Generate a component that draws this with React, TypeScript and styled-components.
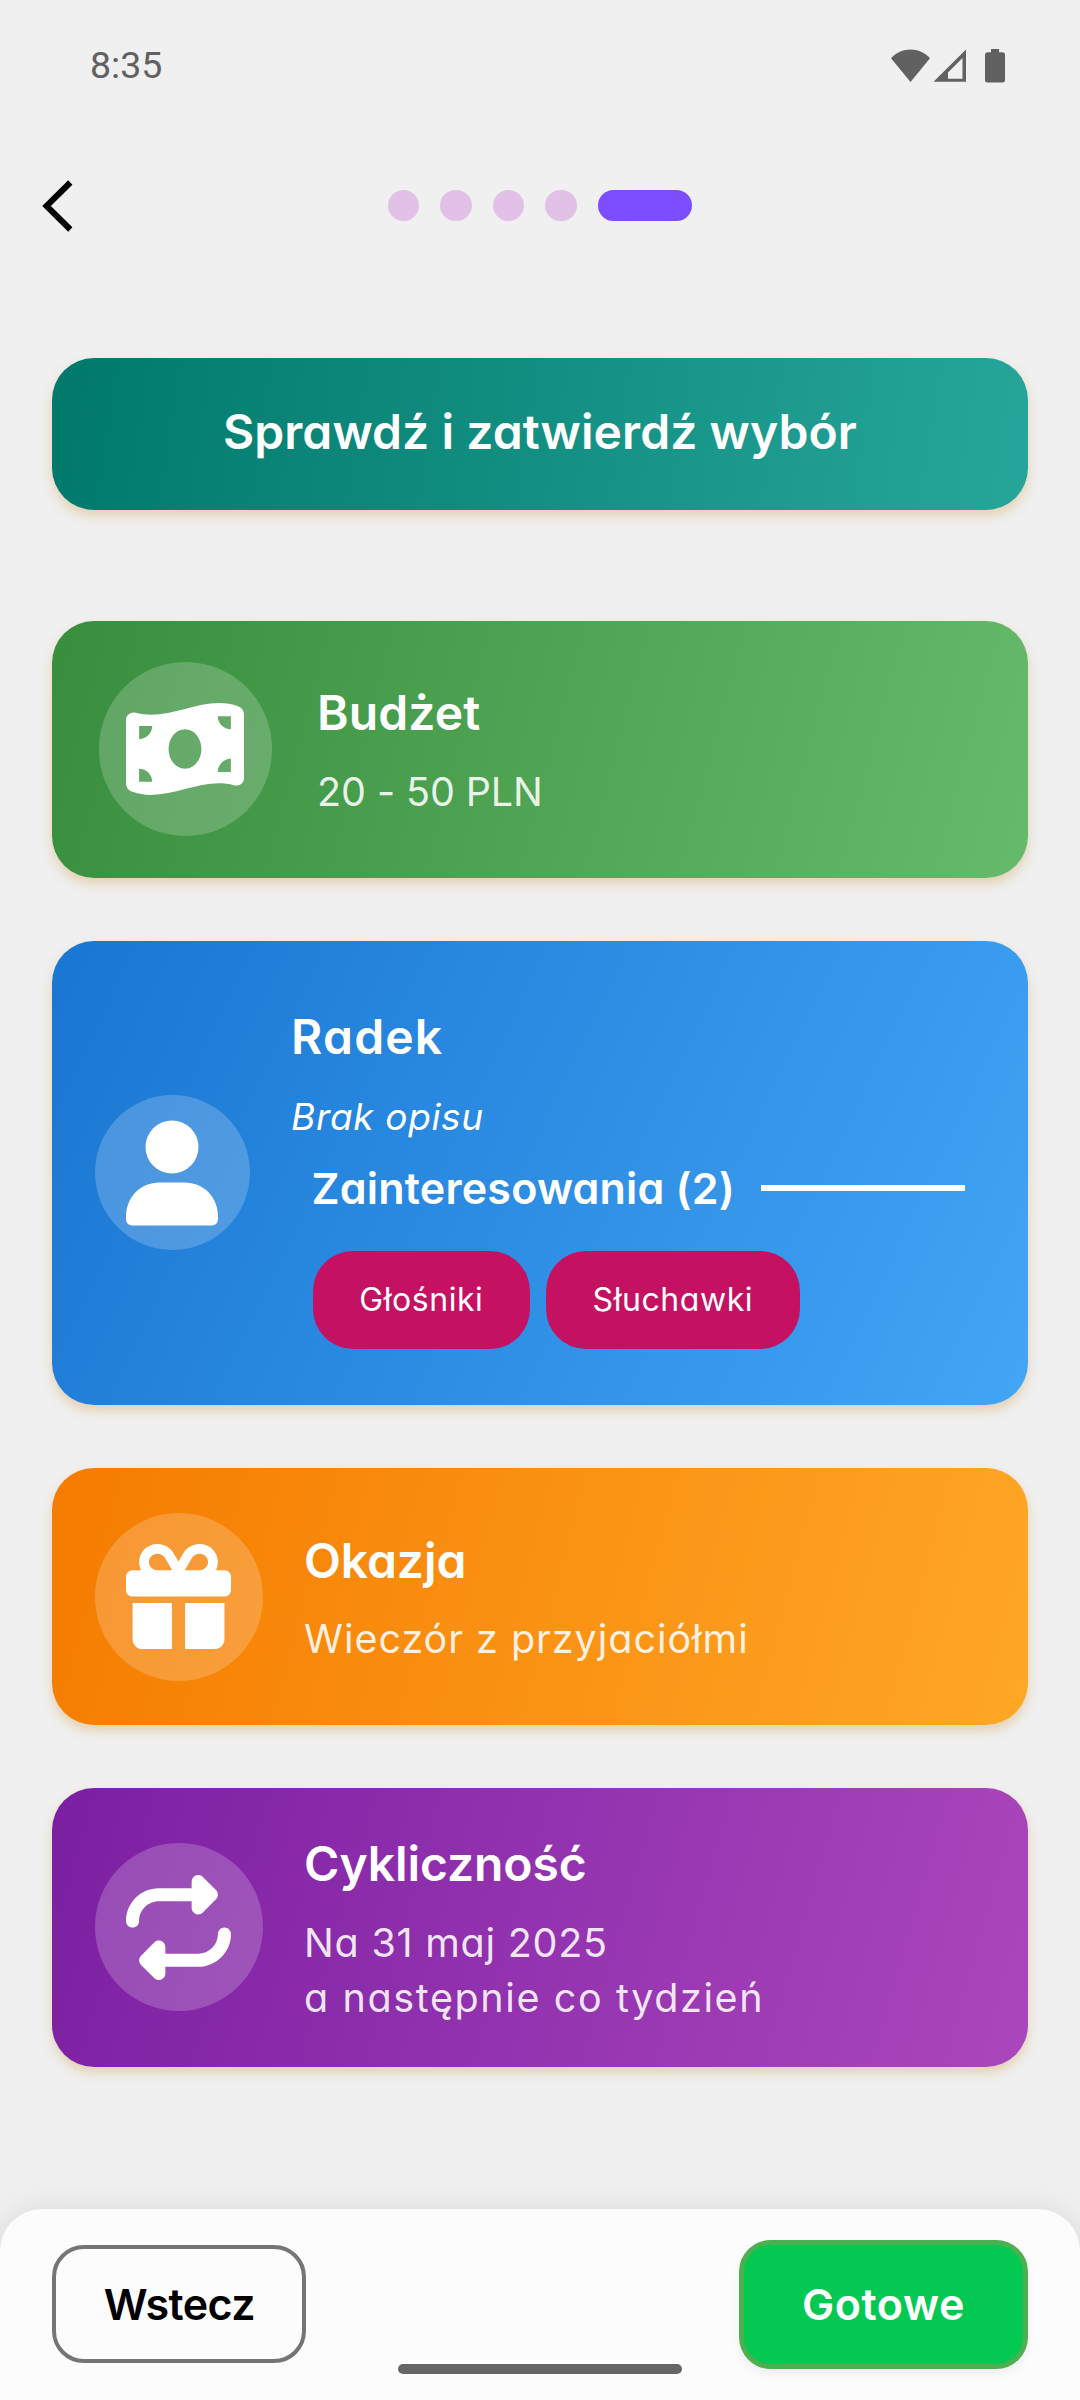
import React from 'react';
import styled, { createGlobalStyle } from 'styled-components';
import { FaMoneyBillWave, FaGift, FaRepeat } from 'react-icons/fa6';

const GlobalStyle = createGlobalStyle`
  *, *::before, *::after { box-sizing: border-box; }
  body { margin: 0; background: #f0f0f0; }
`;

const Screen = styled.div`
  width: 1080px;
  height: 2400px;
  display: flex;
  flex-direction: column;
  overflow: hidden;
  background: #f0f0f0;
  color: #fff;
  font-family: Inter, 'Open Sans', sans-serif;
  font-feature-settings: 'cv11';
`;

const StatusBar = styled.div`
  height: 131px;
  flex: none;
  display: flex;
  align-items: center;
  justify-content: space-between;
  padding: 0 75px 0 90px;
  color: #616161;
`;

const Clock = styled.span`
  padding-bottom: 2px;
  font-family: Roboto, sans-serif;
  font-size: 37.5px;
  line-height: 44px;
`;

const StatusIcons = styled.svg`
  display: block;
  fill: currentColor;
`;

const TopBar = styled.header`
  height: 149px;
  flex: none;
  display: grid;
  grid-template-columns: 1fr auto 1fr;
  align-items: center;
  padding: 0 42px;
`;

const BackButton = styled.button`
  width: 32px;
  height: 52px;
  padding: 0;
  border: 0;
  background: none;
  svg { display: block; }
`;

const Steps = styled.div`
  display: flex;
  gap: 21px;
`;

const Step = styled.span<{ $active?: boolean }>`
  width: ${p => (p.$active ? 94.5 : 31.5)}px;
  height: 31.5px;
  border-radius: 16px;
  background: ${p => (p.$active ? '#7c4dff' : '#e1c2e6')};
`;

const Main = styled.main`
  flex: 1;
  display: flex;
  flex-direction: column;
  gap: 63px;
  padding: 77.5px 52.5px 0 52.4px;
`;

const shadow = '0 6px 11px rgba(205, 150, 60, 0.34)';

const Banner = styled.div`
  height: 152.5px;
  flex: none;
  margin-bottom: 47.5px;
  padding-bottom: 3px;
  display: flex;
  align-items: center;
  justify-content: center;
  border-radius: 42px;
  background: linear-gradient(98.9deg, #00796b, #26a69a);
  box-shadow: ${shadow};
`;

const Card = styled.section<{ $height: number; $angle: number; $from: string; $to: string; $inset?: number; $gap?: number }>`
  height: ${p => p.$height}px;
  flex: none;
  display: flex;
  align-items: center;
  gap: ${p => p.$gap ?? 41.5}px;
  padding: 0 42px 0 ${p => p.$inset ?? 42.2}px;
  border-radius: 42px;
  background: linear-gradient(${p => p.$angle}deg, ${p => p.$from}, ${p => p.$to});
  box-shadow: ${shadow};
`;

const Badge = styled.div<{ $size: number }>`
  width: ${p => p.$size}px;
  height: ${p => p.$size}px;
  flex: none;
  display: flex;
  align-items: center;
  justify-content: center;
  border-radius: 50%;
  background: rgba(255, 255, 255, 0.2);
`;

const Details = styled.div<{ $drop?: number }>`
  flex: 1;
  padding-top: ${p => p.$drop ?? 5}px;
`;

const Title = styled.h2<{ $track?: number }>`
  margin: 0;
  font-size: 48px;
  font-weight: 600;
  line-height: 60px;
  letter-spacing: ${p => p.$track ?? 0}px;
  white-space: nowrap;
`;

const Value = styled.p<{ $track?: number }>`
  margin: 21.5px 0 0;
  font-size: 39.5px;
  line-height: 55px;
  letter-spacing: ${p => p.$track ?? 0}px;
  color: rgba(255, 255, 255, 0.88);
  white-space: nowrap;
  & + & { margin-top: 0; }
`;

const Description = styled.p`
  margin: 25px 0 0;
  font-size: 37px;
  font-style: italic;
  line-height: 50px;
  letter-spacing: 0.65px;
`;

const Interests = styled.div`
  margin: 16px 21px 0 21.5px;
`;

const InterestsHead = styled.div`
  display: flex;
  align-items: center;
  height: 60px;
`;

const InterestsLabel = styled.h3`
  flex: 0 0 448px;
  margin: 0;
  font-size: 43px;
  font-weight: 600;
  letter-spacing: 0.2px;
  text-indent: -1px;
  white-space: nowrap;
`;

const Rule = styled.span`
  flex: 1;
  height: 5.25px;
  background: #fff;
`;

const Chips = styled.div`
  display: flex;
  gap: 15.75px;
  margin-top: 33px;
`;

const Chip = styled.span<{ $width: number }>`
  width: ${p => p.$width}px;
  height: 97.5px;
  display: flex;
  align-items: center;
  justify-content: center;
  border-radius: 40px;
  background: #c51162;
  font-size: 32px;
  letter-spacing: 0.55px;
`;

const Footer = styled.footer`
  position: relative;
  height: 191.5px;
  flex: none;
  display: flex;
  align-items: flex-start;
  justify-content: space-between;
  padding: 31px 52px 0 52.4px;
  border-radius: 42px 42px 0 0;
  background: #fcfcfc;
  box-shadow: 0 0 32px rgba(0, 0, 0, 0.1);
`;

const Button = styled.button<{ $primary?: boolean }>`
  width: ${p => (p.$primary ? 289 : 254)}px;
  height: ${p => (p.$primary ? 129.5 : 118)}px;
  margin-top: ${p => (p.$primary ? 0 : 5.5)}px;
  padding: 0 0 1px;
  border: ${p => (p.$primary ? '5px solid #4caf50' : '4px solid #757575')};
  border-radius: 32px;
  background: ${p => (p.$primary ? '#03c953' : 'transparent')};
  box-shadow: ${p => (p.$primary ? '0 5px 10px rgba(0, 0, 0, 0.06)' : 'none')};
  color: ${p => (p.$primary ? '#fff' : '#000')};
  font: 600 43px Inter, sans-serif;
  font-feature-settings: 'cv11';
  letter-spacing: ${p => (p.$primary ? 0.6 : -0.6)}px;
`;

const HomeIndicator = styled.div`
  position: absolute;
  left: 398px;
  top: 155.5px;
  width: 284px;
  height: 10px;
  border-radius: 5px;
  background: #666;
`;

export default function App() {
  return (
    <Screen>
      <GlobalStyle />
      <StatusBar>
        <Clock>8:35</Clock>
        <StatusIcons width="114" height="34" viewBox="0 0 114 34">
          <path d="M0 9.3C10-2.4 29-2.4 39 9.3L19.5 33Z" />
          <path fillRule="evenodd" d="M75 0.5V32.7H42.5ZM71.5 9L57 23.5V29.7H71.5Z" />
          <path d="M100 0h8v3.2h3.5a2.5 2.5 0 0 1 2.5 2.5V31a2.5 2.5 0 0 1-2.5 2.5h-15A2.5 2.5 0 0 1 94 31V5.7a2.5 2.5 0 0 1 2.5-2.5H100Z" />
        </StatusIcons>
      </StatusBar>
      <TopBar>
        <BackButton aria-label="Wstecz">
          <svg width="32" height="52" viewBox="0 0 32 52" fill="none" stroke="#000" strokeWidth="6">
            <path d="M28.3 2.5L4.5 26L28.3 49.5" />
          </svg>
        </BackButton>
        <Steps>
          <Step />
          <Step />
          <Step />
          <Step />
          <Step $active />
        </Steps>
      </TopBar>
      <Main>
        <Banner>
          <Title as="h1" $track={0.08}>Sprawdź i zatwierdź wybór</Title>
        </Banner>
        <Card $height={257} $angle={104.8} $from="#388e3c" $to="#66bb6a" $inset={46.2} $gap={45}>
          <Badge $size={173.5}>
            <FaMoneyBillWave size={118} />
          </Badge>
          <Details>
            <Title $track={0.1}>Budżet</Title>
            <Value $track={-0.1}>20 - 50 PLN</Value>
          </Details>
        </Card>
        <Card $height={464.5} $angle={115.5} $from="#1976d2" $to="#42a5f5">
          <Badge $size={155}>
            <svg width="92" height="106" viewBox="0 0 92 106" fill="#fff">
              <circle cx="46" cy="27" r="26.5" />
              <path d="M0 97C0 77 14 62.5 34 62.5H58C78 62.5 92 77 92 97V99.5A6 6 0 0 1 86 105.5H6A6 6 0 0 1 0 99.5Z" />
            </svg>
          </Badge>
          <Details $drop={10}>
            <Title $track={1.2}>Radek</Title>
            <Description>Brak opisu</Description>
            <Interests>
              <InterestsHead>
                <InterestsLabel>Zainteresowania (2)</InterestsLabel>
                <Rule />
              </InterestsHead>
              <Chips>
                <Chip $width={217.5}>Głośniki</Chip>
                <Chip $width={254}>Słuchawki</Chip>
              </Chips>
            </Interests>
          </Details>
        </Card>
        <Card $height={257} $angle={104.8} $from="#f57c00" $to="#ffa726">
          <Badge $size={168}>
            <FaGift size={105} />
          </Badge>
          <Details>
            <Title $track={-0.1}>Okazja</Title>
            <Value $track={0.95}>Wieczór z przyjaciółmi</Value>
          </Details>
        </Card>
        <Card $height={278.5} $angle={105.9} $from="#7b1fa2" $to="#ab47bc">
          <Badge $size={168}>
            <FaRepeat size={105} />
          </Badge>
          <Details>
            <Title $track={-0.1}>Cykliczność</Title>
            <Value $track={0.75}>Na 31 maj 2025</Value>
            <Value $track={1.6}>a następnie co tydzień</Value>
          </Details>
        </Card>
      </Main>
      <Footer>
        <Button>Wstecz</Button>
        <Button $primary>Gotowe</Button>
        <HomeIndicator />
      </Footer>
    </Screen>
  );
}
